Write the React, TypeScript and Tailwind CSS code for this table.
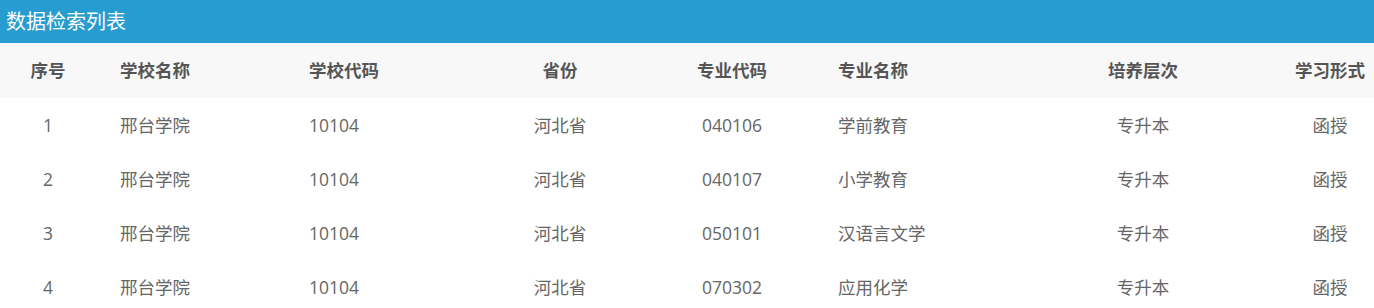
const COLS = [
  { label: '序号', w: 'w-[96px]', align: 'justify-center' },
  { label: '学校名称', w: 'w-[189px]', align: 'justify-start pl-6' },
  { label: '学校代码', w: 'w-[185px]', align: 'justify-start pl-6' },
  { label: '省份', w: 'w-[180px]', align: 'justify-center' },
  { label: '专业代码', w: 'w-[164px]', align: 'justify-center' },
  { label: '专业名称', w: 'w-[186px]', align: 'justify-start pl-6' },
  { label: '培养层次', w: 'w-[286px]', align: 'justify-center' },
  { label: '学习形式', w: 'flex-1', align: 'justify-center' },
];

const ROWS = [
  ['1', '邢台学院', '10104', '河北省', '040106', '学前教育', '专升本', '函授'],
  ['2', '邢台学院', '10104', '河北省', '040107', '小学教育', '专升本', '函授'],
  ['3', '邢台学院', '10104', '河北省', '050101', '汉语言文学', '专升本', '函授'],
  ['4', '邢台学院', '10104', '河北省', '070302', '应用化学', '专升本', '函授'],
];

export default function App() {
  return (
    <div className="w-[1374px] bg-white font-['Open_Sans','Noto_Sans_CJK_SC',sans-serif]">
      <div className="flex h-[43px] items-center bg-[#279cd0] pl-[6px] text-[20px] text-white">
        数据检索列表
      </div>
      <div className="flex h-[55px] bg-[#f8f8f8] text-[17.5px] font-bold text-[#555]">
        {COLS.map((c) => (
          <div key={c.label} className={`flex items-center ${c.w} ${c.align}`}>
            {c.label}
          </div>
        ))}
      </div>
      {ROWS.map((row) => (
        <div key={row[0]} className="flex h-[54px] text-[17.5px] text-[#666]">
          {row.map((cell, i) => (
            <div key={i} className={`flex items-center ${COLS[i].w} ${COLS[i].align}`}>
              {cell}
            </div>
          ))}
        </div>
      ))}
    </div>
  );
}
